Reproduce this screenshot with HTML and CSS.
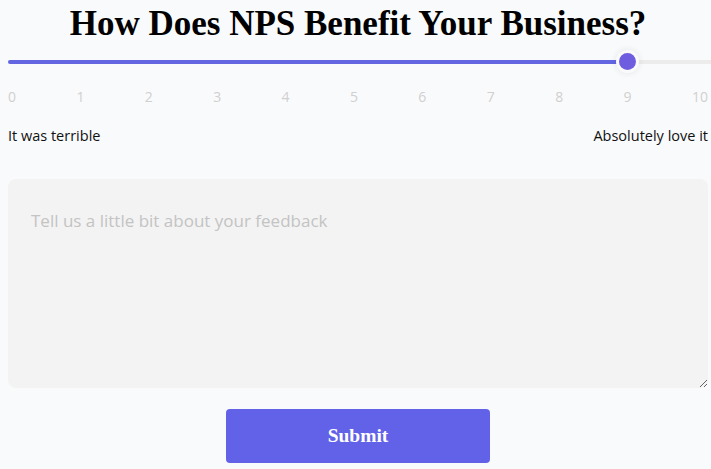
FILE: index.html
```html
<!DOCTYPE html>
<html>
<head>
<meta charset="utf-8">
<link rel="stylesheet" href="styles.css">
</head>
<body>
<main class="nps">
  <h1 class="title">How Does NPS Benefit Your Business?</h1>
  <div class="slider">
    <div class="track"><div class="fill" style="width:87.6%"></div></div>
    <div class="thumb" style="left:87.3%"></div>
  </div>
  <div class="scale">
    <span>0</span><span>1</span><span>2</span><span>3</span><span>4</span><span>5</span><span>6</span><span>7</span><span>8</span><span>9</span><span>10</span>
  </div>
  <div class="labels">
    <span>It was terrible</span>
    <span>Absolutely love it</span>
  </div>
  <textarea class="feedback" placeholder="Tell us a little bit about your feedback"></textarea>
  <div class="actions">
    <button class="submit">Submit</button>
  </div>
</main>
</body>
</html>
```

FILE: styles.css
```css
html, body {
  margin: 0;
  padding: 0;
  background: #f9fafb;
}
body {
  overflow: hidden;
}
.nps {
  margin-left: 8px;
  width: 700px;
  display: flex;
  flex-direction: column;
}
.title {
  margin: 4px 0 0;
  font-family: "Liberation Serif", "Times New Roman", serif;
  font-weight: bold;
  font-size: 35px;
  line-height: 40px;
  text-align: center;
  color: #000;
}
.slider {
  position: relative;
  height: 20px;
  margin-top: 8px;
}
.track {
  position: absolute;
  left: 0;
  right: -8px;
  top: 8px;
  height: 4px;
  border-radius: 2px;
  background: #ececec;
}
.fill {
  height: 100%;
  border-radius: 2px;
  background: #6366e0;
}
.thumb {
  position: absolute;
  top: 1px;
  width: 17px;
  height: 17px;
  border-radius: 50%;
  background: #6f5de0;
  box-shadow: 0 0 0 3px #fafafa, 0 0 5px 5px rgba(0,0,0,0.05);
}
.scale {
  display: flex;
  justify-content: space-between;
  margin-top: 16px;
  font-family: "Open Sans", "Noto Sans", sans-serif;
  font-size: 14px;
  line-height: 18px;
  color: #d0d0d0;
}
.labels {
  display: flex;
  justify-content: space-between;
  margin-top: 20px;
  font-family: "Open Sans", "Noto Sans", sans-serif;
  font-size: 14.5px;
  line-height: 20px;
  color: #111;
}
.feedback {
  display: block;
  box-sizing: border-box;
  margin-top: 33px;
  width: 700px;
  height: 209px;
  padding: 30px 23px;
  border: none;
  border-radius: 8px;
  background: #f3f3f3;
  font-family: "Open Sans", "Noto Sans", sans-serif;
  font-size: 17px;
  color: #333;
  resize: both;
  outline: none;
}
.feedback::placeholder {
  color: #c3c3c3;
}
.actions {
  display: flex;
  justify-content: center;
  margin-top: 21px;
}
.submit {
  width: 264px;
  height: 54px;
  border: none;
  border-radius: 4px;
  background: #6262e8;
  color: #fff;
  font-family: "Liberation Serif", "Times New Roman", serif;
  font-weight: bold;
  font-size: 19.5px;
}
```
